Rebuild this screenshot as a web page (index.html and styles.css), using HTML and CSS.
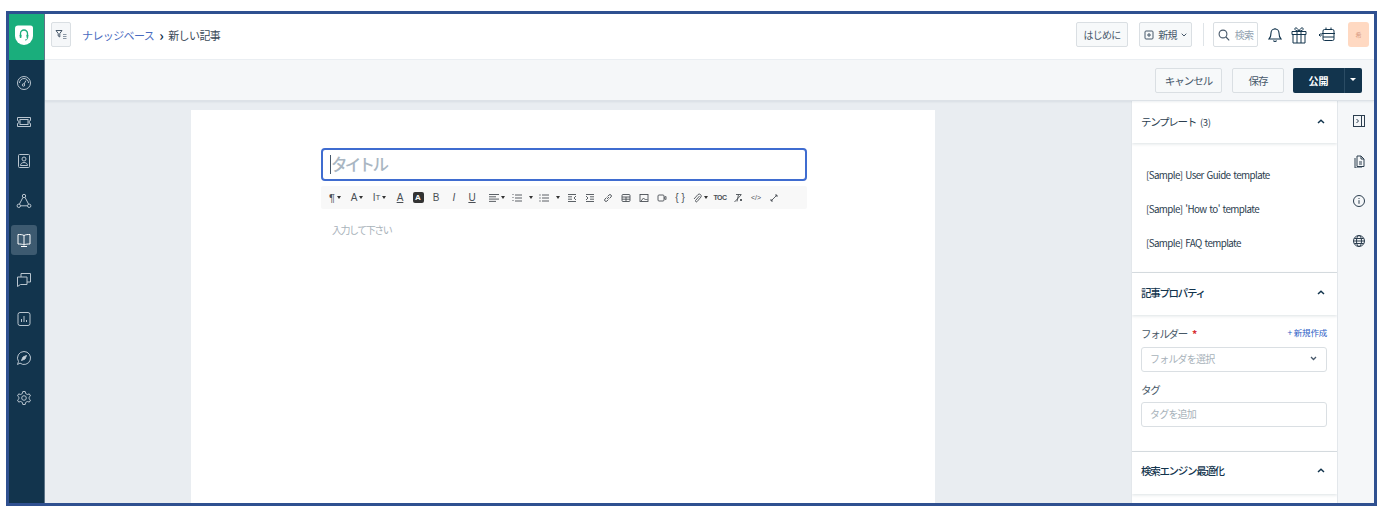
FILE: index.html
```html
<!DOCTYPE html>
<html lang="ja">
<head>
	<meta charset="utf-8">
	<title>新しい記事</title>
	<link rel="stylesheet" href="styles.css">
</head>
<body>
	<div id="frame">
		<nav id="sidebar">
			<div id="logo">
				<svg width="18" height="20" viewBox="0 0 18 20"><path d="M3 .5h12.500Q18 .5 18 3v8a9 9 0 0 1-18 0V3.500Q0 .5 3 .5z" fill="#fff"/><path d="M5.500 11V8.500a3.500 3.500 0 0 1 7 0V11" fill="none" stroke="#1aae7c" stroke-width="1.300"/><rect x="4.700" y="9.500" width="1.800" height="3.500" rx=".8" fill="#1aae7c"/><rect x="11.500" y="9.500" width="1.800" height="3.500" rx=".8" fill="#1aae7c"/><path d="M12.500 13c0 1.500-1 2-2.500 2" fill="none" stroke="#1aae7c" stroke-width=".9"/></svg>
			</div>
			<div class="nav-item">
				<svg class="nav-icon" viewBox="0 0 16 16"><circle cx="8" cy="8" r="6.500"/><path d="M3.500 8a4.500 4.500 0 0 1 9 0M8 9l2-3.500"/><circle cx="7.500" cy="10" r="1.200"/></svg>
			</div>
			<div class="nav-item">
				<svg class="nav-icon" viewBox="0 0 16 16"><path d="M1.500 3.500h13v3a1.500 1.500 0 0 0 0 3v3h-13v-3a1.500 1.500 0 0 0 0-3z"/><rect x="4" y="5.500" width="8" height="5"/></svg>
			</div>
			<div class="nav-item">
				<svg class="nav-icon" viewBox="0 0 16 16"><rect x="2.500" y="1.500" width="11" height="13" rx="1"/><circle cx="8" cy="6" r="2"/><path d="M4.500 12.500c0-4 7-4 7 0z"/></svg>
			</div>
			<div class="nav-item">
				<svg class="nav-icon" viewBox="0 0 16 16"><circle cx="8" cy="3" r="1.700"/><circle cx="2.800" cy="12.800" r="1.700"/><circle cx="13.200" cy="12.800" r="1.700"/><path d="M4.500 12.800h7M6.900 4.500 3.500 11M9.100 4.500l3.400 6.500"/></svg>
			</div>
			<div class="nav-item active">
				<svg class="nav-icon bright" viewBox="0 0 16 16"><path d="M8 3.500C6.500 2.500 4 2.500 2 2.500v9.500c2 0 4.500 0 6 1 1.500-1 4-1 6-1V2.500c-2 0-4.500 0-6 1zM8 3.500V13M5 14.500h6"/></svg>
			</div>
			<div class="nav-item">
				<svg class="nav-icon" viewBox="0 0 16 16"><path d="M5 5V1.500h9.500V10H11"/><path d="M1.500 5H11v7.500H4.500l-3 2z"/></svg>
			</div>
			<div class="nav-item">
				<svg class="nav-icon" viewBox="0 0 16 16"><rect x="2" y="1.500" width="12" height="13" rx="2"/><path d="M5.500 11V8M8 11V5M10.500 11V9"/></svg>
			</div>
			<div class="nav-item">
				<svg class="nav-icon" viewBox="0 0 16 16"><path d="M8 1.500a6.500 6.500 0 1 1-4 11.600L1.500 14.500l1-3A6.500 6.500 0 0 1 8 1.500z"/><path d="M5.500 10.500 7 7l3.500-1.500L9 9z" fill="#c9d3db"/></svg>
			</div>
			<div class="nav-item">
				<svg class="nav-icon" viewBox="0 0 16 16"><circle cx="8" cy="8" r="2.300"/><path d="M6.800 1.500h2.400l.4 2 1.700 1 2-.6 1.200 2-1.500 1.400v1.400l1.500 1.400-1.200 2-2-.6-1.700 1-.4 2H6.800l-.4-2-1.700-1-2 .6-1.200-2 1.500-1.400V7.300L1.500 5.900l1.200-2 2 .6 1.700-1z"/></svg>
			</div>
		</nav>

		<div id="main">
			<header id="topbar">
				<div class="filter-btn">
					<svg width="12" height="12" viewBox="0 0 12 12"><path d="M1 1.500h6L4.800 4.500V8L3.200 7V4.500z" fill="none" stroke="#47586a" stroke-width="1"/><path d="M8 5.500h3.500M8 7.500h3.500M8 9.500h3.500" stroke="#8a97a4" stroke-width="1"/></svg>
				</div>
				<div class="crumbs"><a>ナレッジベース</a><span class="crumb-sep">›</span><span>新しい記事</span></div>
				<div class="top-right">
					<div class="btn small start-btn">はじめに</div>
					<div class="btn small new-btn">
						<svg width="10" height="10" viewBox="0 0 10 10"><rect x="1" y="1" width="8" height="8" rx="1" fill="none" stroke="#47586a"/><path d="M3 5h4M5 3v4" stroke="#47586a"/></svg>
						<span>新規</span>
						<svg width="6" height="4" viewBox="0 0 6 4"><path d="M.7.700 3 3 5.300.700" fill="none" stroke="#47586a" stroke-width="1"/></svg>
					</div>
					<div class="top-sep"></div>
					<div class="btn small search-btn">
						<svg width="12" height="12" viewBox="0 0 12 12"><circle cx="5" cy="5" r="3.900" fill="none" stroke="#47586a" stroke-width="1.100"/><path d="m8 8 3.200 3.400" stroke="#47586a" stroke-width="1.100"/></svg>
						<span>検索</span>
					</div>
					<svg class="bell" width="14" height="18" viewBox="0 3.500 14 15"><path d="M1 15c1.500-1.500 2-2.500 2-6a4 4 0 0 1 8 0c0 3.500.5 4.500 2 6zM5.500 16.500a1.600 1.600 0 0 0 3 0M7 5V4" fill="none" stroke="#12344d" stroke-width="1.100"/></svg>
					<svg class="gift" width="16" height="20" viewBox="0 0 16 20"><path d="M1 6.500h14v3H1zM2 9.500h12v8.500H2zM6 6.500V18M10 6.500V18M8 6C6 2 3.500 2 4 4.500 4.300 6 8 6 8 6zM8 6c2-4 4.500-4 4-1.500C11.700 6 8 6 8 6z" fill="none" stroke="#12344d" stroke-width="1"/></svg>
					<svg class="tray" width="18" height="18" viewBox="0 0 18 18"><rect x="5" y="3.500" width="11" height="11" rx="1.500" fill="none" stroke="#12344d"/><path d="M3.500 7.500H17M5 11h11M8 1.500v2M13 1.500v2M1 9h3M1 9l1.500-1.500M1 9l1.500 1.500" fill="none" stroke="#12344d" stroke-width="1"/></svg>
					<div class="avatar">希</div>
				</div>
			</header>

			<div id="actionbar">
				<div class="btn action cancel">キャンセル</div>
				<div class="btn action save">保存</div>
				<div class="publish"><span class="publish-label">公開</span><span class="publish-caret"></span></div>
			</div>

			<div id="workspace">
				<div id="canvas">
					<div id="paper">
						<div class="title-box"><span class="cursor"></span><span>タイトル</span></div>
						<div class="toolbar">
							<span class="tool dd para">¶<i class="drop"></i></span>
							<span class="tool dd">A<i class="drop"></i></span>
							<span class="tool dd size">I<small>T</small><i class="drop"></i></span>
							<span class="tool"><u>A</u></span>
							<span class="tool"><span class="inv">A</span></span>
							<span class="tool">B</span>
							<span class="tool ital">I</span>
							<span class="tool"><u>U</u></span>
							<span class="tool align">
								<svg class="tool-svg" viewBox="0 0 10 10"><path d="M0 1.500h10M0 3.800h7M0 6.100h10M0 8.400h7"/></svg><i class="drop"></i>
							</span>
							<span class="tool list">
								<svg class="tool-svg" viewBox="0 0 10 10"><path d="M3 2h7M3 5h7M3 8h7M.5 1.500h1M.5 4.500h1M.5 7.500h1"/></svg><i class="drop far"></i>
							</span>
							<span class="tool list">
								<svg class="tool-svg" viewBox="0 0 10 10"><path d="M3 2h7M3 5h7M3 8h7M.3 2h1.400M.3 5h1.400M.3 8h1.400"/></svg><i class="drop far"></i>
							</span>
							<span class="tool">
								<svg class="tool-svg" viewBox="0 0 10 10"><path d="M1 1.500h8M1 8.500h8M1 3.800h4M1 6.200h4M9 3 7 5l2 2"/></svg>
							</span>
							<span class="tool">
								<svg class="tool-svg" viewBox="0 0 10 10"><path d="M1 1.500h8M1 8.500h8M5 3.800h4M5 6.200h4M1 3l2 2-2 2"/></svg>
							</span>
							<span class="tool">
								<svg class="tool-svg" viewBox="0 0 10 10"><path d="M4 6 6 4M3.500 4.500 2 6a1.400 1.400 0 0 0 2 2l1.500-1.500M4.500 3.500 6 2a1.400 1.400 0 0 1 2 2L6.500 5.500"/></svg>
							</span>
							<span class="tool">
								<svg class="tool-svg" viewBox="0 0 10 10"><rect x="1" y="1.500" width="8" height="7" rx="1"/><path d="M1 4h8M1 6.200h8M5 4v4.500"/></svg>
							</span>
							<span class="tool">
								<svg class="tool-svg" viewBox="0 0 10 10"><rect x="1" y="1.500" width="8" height="7"/><path d="m2 8 2.500-3 2 2 1-1 1 1"/></svg>
							</span>
							<span class="tool">
								<svg class="tool-svg" viewBox="0 0 10 10"><rect x="1" y="2" width="6" height="6" rx="1"/><path d="M7 4.500 9 3.500v3L7 5.500"/></svg>
							</span>
							<span class="tool">{ }</span>
							<span class="tool dd">
								<svg class="tool-svg" viewBox="0 0 10 10"><path d="M7.500 3 3.500 7.500a1 1 0 0 0 1.500 1.200L9 4a2 2 0 0 0-3-2.500L2 6"/></svg><i class="drop"></i>
							</span>
							<span class="tool toc">TOC</span>
							<span class="tool">
								<svg class="tool-svg" viewBox="0 0 10 10"><path d="M3 1.500h5M5.500 1.500 4 8.500M1.500 9 8.500 1.500M7 6l2 2M9 6 7 8"/></svg>
							</span>
							<span class="tool code">&lt;/&gt;</span>
							<span class="tool">
								<svg class="tool-svg" viewBox="0 0 10 10"><path d="M2 8l6-6M6 2h2v2M2 6v2h2"/></svg>
							</span>
						</div>
						<div class="body-placeholder">入力して下さい</div>
					</div>
				</div>

				<aside id="panel">
					<div class="panel-head">
						<span>テンプレート<em>(3)</em></span>
						<svg width="8" height="5" viewBox="0 0 8 5"><path d="M1 4 4 1.200 7 4" fill="none" stroke="#12344d" stroke-width="1.500"/></svg>
					</div>
					<div class="template-list">
						<div>[Sample] User Guide template</div>
						<div>[Sample] 'How to' template</div>
						<div>[Sample] FAQ template</div>
					</div>
					<div class="panel-head prop-head">
						<span class="bold">記事プロパティ</span>
						<svg width="8" height="5" viewBox="0 0 8 5"><path d="M1 4 4 1.200 7 4" fill="none" stroke="#12344d" stroke-width="1.500"/></svg>
					</div>
					<div class="props">
						<div class="label-row">
							<span>フォルダー<b>*</b></span>
							<a>+ 新規作成</a>
						</div>
						<div class="field">
							<span>フォルダを選択</span>
							<svg width="7" height="5" viewBox="0 0 7 5"><path d="M1 1 3.500 3.500 6 1" fill="none" stroke="#47586a" stroke-width="1.300"/></svg>
						</div>
						<div class="label-row tag-label"><span>タグ</span></div>
						<div class="field"><span>タグを追加</span></div>
					</div>
					<div class="panel-head seo-head">
						<span class="bold">検索エンジン最適化</span>
						<svg width="8" height="5" viewBox="0 0 8 5"><path d="M1 4 4 1.200 7 4" fill="none" stroke="#12344d" stroke-width="1.500"/></svg>
					</div>
				</aside>

				<div id="rail">
					<svg class="rail-icon" viewBox="0 0 14 14"><rect x="1.500" y="1.500" width="11" height="11"/><path d="M9.500 1.500v11M4.500 5 6.500 7l-2 2"/></svg>
					<svg class="rail-icon" viewBox="0 0 14 14"><path d="M5 2h4l3 3v7.500H5zM9 2v3h3M3 4v10h7M7 8h3M7 10h3"/></svg>
					<svg class="rail-icon" viewBox="0 0 14 14"><circle cx="7" cy="7" r="5.500"/><path d="M7 6.200v3.600M7 4v1"/></svg>
					<svg class="rail-icon" viewBox="0 0 14 14"><circle cx="7" cy="7" r="5.500"/><ellipse cx="7" cy="7" rx="2.500" ry="5.500"/><path d="M1.500 7h11M2.300 4.500h9.400M2.300 9.500h9.400"/></svg>
				</div>
			</div>
		</div>
	</div>
</body>
</html>
```

FILE: styles.css
```css
*{
	box-sizing: border-box;
}

html, body{
	width: 100%;
	height: 100%;
	margin: 0px;
	background-color: #fff;
	overflow: hidden;
	font-family: "Noto Sans CJK JP", "Noto Sans", sans-serif;
	color: #12344d;
}

#frame{
	display: flex;
	width: 1371px;
	height: 495px;
	margin: 11px 0 0 6px;
	border: 3px solid #2f5090;
	overflow: hidden;
}

/* left nav */
#sidebar{
	flex: 0 0 36px;
	display: flex;
	flex-direction: column;
	align-items: center;
	padding-right: 5px;
	background-color: #12344d;
	border-right: 1px solid #5d7488;
}

#logo{
	display: flex;
	align-items: center;
	justify-content: center;
	flex: 0 0 46px;
	width: 35px;
	margin: 0 -5px 3px 0;
	padding: 0 5px 5px 0;
	background-color: #1aae7c;
}

.nav-item{
	display: flex;
	align-items: center;
	justify-content: center;
	flex: 0 0 39.400px;
	width: 26px;
}

.nav-item.active{
	flex: 0 0 30px;
	margin: 4.700px 0;
	border-radius: 3px;
	background-color: #3d5a70;
}

.nav-icon{
	width: 16px;
	height: 16px;
	fill: none;
	stroke: #b9c5cf;
	stroke-width: 1;
}

.nav-icon.bright{
	stroke: #fff;
}

#main{
	flex: 1;
	display: flex;
	flex-direction: column;
	min-width: 0;
}

/* top bar */
#topbar{
	flex: 0 0 46px;
	display: flex;
	align-items: center;
	padding: 0 5px 4px 6px;
	background-color: #fff;
	border-bottom: 1px solid #ebeff3;
}

.filter-btn{
	display: flex;
	align-items: center;
	justify-content: center;
	width: 20px;
	height: 25px;
	border: 1px solid #dadfe3;
	border-radius: 2px;
	background-color: #f5f7f9;
}

.crumbs{
	display: flex;
	align-items: center;
	margin-left: 11px;
	font-size: 11px;
	letter-spacing: -0.600px;
	color: #3a4a58;
}

.crumbs a{
	color: #4a6bc0;
}

.crumb-sep{
	margin: 0 5px 0 5px;
	font-size: 14px;
	font-weight: bold;
	line-height: 14px;
	color: #12344d;
}

.top-right{
	display: flex;
	align-items: center;
	margin-left: auto;
}

.btn{
	display: flex;
	align-items: center;
	justify-content: center;
	border: 1px solid #dadfe3;
	border-radius: 2px;
	background-color: #f7f9fa;
	color: #47586a;
}

.btn.small{
	height: 25px;
	font-size: 10px;
	letter-spacing: -0.800px;
}

.start-btn{
	width: 52px;
}

.new-btn{
	gap: 4px;
	width: 53px;
	margin-left: 11px;
}

.top-sep{
	width: 1px;
	height: 23px;
	margin: 0 9px 0 11px;
	background-color: #dfe4e8;
}

.btn.search-btn{
	gap: 5px;
	width: 45px;
	background-color: #fff;
	color: #92a2b1;
}

.bell{
	margin-left: 10px;
}

.gift{
	margin-left: 9px;
}

.tray{
	margin-left: 11px;
}

.avatar{
	display: flex;
	align-items: center;
	justify-content: center;
	width: 21px;
	height: 25px;
	margin-left: 12px;
	border-radius: 3px;
	background-color: #ffd9c2;
	font-size: 6px;
	color: #d99c84;
}

/* action bar */
#actionbar{
	flex: 0 0 41px;
	display: flex;
	align-items: center;
	justify-content: flex-end;
	padding: 0 12px 0 0;
	background-color: #f5f7f9;
	border-bottom: 1px solid #dde2e7;
	box-shadow: 0 1px 2px rgba(18, 52, 77, 0.08);
	position: relative;
}

.btn.action{
	height: 25px;
	font-size: 10.500px;
	letter-spacing: -1px;
}

.cancel{
	width: 67px;
}

.save{
	width: 52px;
	margin-left: 10px;
}

.publish{
	display: flex;
	width: 69px;
	height: 25px;
	margin-left: 9px;
	border-radius: 2px;
	overflow: hidden;
	background-color: #12344d;
	color: #fff;
	font-size: 10px;
	font-weight: bold;
}

.publish-label{
	display: flex;
	align-items: center;
	justify-content: center;
	flex: 1;
	border-right: 1px solid #2b4c64;
}

.publish-caret{
	position: relative;
	flex: 0 0 17px;
}

.publish-caret::after{
	content: "";
	position: absolute;
	top: 10px;
	left: 5px;
	border: 3px solid transparent;
	border-top: 3px solid #fff;
}

/* editor */
#workspace{
	flex: 1;
	display: flex;
	min-height: 0;
}

#canvas{
	flex: 1;
	display: flex;
	padding: 9px 0 0 146px;
	background-color: #e9edf1;
	min-width: 0;
}

#paper{
	width: 744px;
	padding: 38px 128px 0 130px;
	background-color: #fff;
}

.title-box{
	display: flex;
	align-items: center;
	height: 33px;
	padding: 0 0 1px 7px;
	border: 2px solid #3f6cd0;
	border-radius: 4px;
	font-size: 16.500px;
	font-weight: 500;
	letter-spacing: -2.700px;
	color: #a9b6c2;
}

.cursor{
	width: 1px;
	height: 19px;
	margin-right: 0px;
	background-color: #47586a;
}

.toolbar{
	display: flex;
	align-items: center;
	height: 23px;
	margin-top: 5px;
	padding-left: 3px;
	border-radius: 2px;
	background-color: #f8f8f8;
	color: #4a4f55;
	font-size: 10px;
	font-family: "Liberation Sans", sans-serif;
}

.tool{
	flex: 0 0 18px;
	display: inline-flex;
	align-items: center;
	justify-content: center;
	line-height: 12px;
}

.tool.dd{
	flex-basis: 22px;
}

.tool.size{
	flex-basis: 23px;
}

.tool.align{
	flex-basis: 28px;
	padding-left: 4px;
}

.tool.list{
	flex-basis: 27px;
}

.para{
	font-size: 11px;
}

.tool small{
	font-size: 8px;
}

.drop{
	width: 0;
	height: 0;
	margin-left: 2px;
	border: 2.500px solid transparent;
	border-top: 3px solid #333;
	border-bottom: 0;
}

.drop.far{
	margin-left: 7px;
}

.inv{
	display: flex;
	align-items: center;
	justify-content: center;
	width: 11px;
	height: 11px;
	border-radius: 2px;
	background-color: #333;
	color: #fff;
	font-size: 8px;
	font-weight: bold;
}

.ital{
	font-style: italic;
}

.toc{
	font-size: 7px;
	font-weight: bold;
	letter-spacing: -0.500px;
}

.code{
	font-size: 7px;
}

.tool-svg{
	flex: none;
	width: 10px;
	height: 10px;
	fill: none;
	stroke: #4a4f55;
	stroke-width: 0.900;
}

.body-placeholder{
	margin-top: 13px;
	padding-left: 11px;
	font-size: 10px;
	letter-spacing: -1.500px;
	color: #a8b2ba;
}

/* right panel */
#panel{
	flex: 0 0 207px;
	overflow: hidden;
	background-color: #fff;
	border-left: 1px solid #e3e7eb;
	border-right: 1px solid #e3e7eb;
}

.panel-head{
	display: flex;
	align-items: center;
	justify-content: space-between;
	height: 42px;
	padding: 0 12px 2px 9px;
	font-size: 10.500px;
	letter-spacing: -1.300px;
	color: #2c3e4f;
	box-shadow: 0 1px 3px rgba(18, 52, 77, 0.15);
	position: relative;
}

.panel-head em{
	margin-left: 4px;
	font-style: normal;
	font-size: 9.500px;
	letter-spacing: -0.300px;
}

.bold{
	font-weight: 500;
	color: #12344d;
}

.prop-head{
	padding-bottom: 4px;
}

.template-list{
	display: flex;
	flex-direction: column;
	gap: 16px;
	height: 130px;
	padding: 23px 0 0 14px;
	font-size: 9.800px;
	letter-spacing: -0.600px;
	word-spacing: 1.200px;
	line-height: 18px;
	color: #2c3e4f;
	border-bottom: 1px solid #dadfe3;
}

.props{
	height: 137px;
	padding: 8px 10px 0 9px;
	border-bottom: 1px solid #dadfe3;
}

.label-row{
	display: flex;
	align-items: center;
	justify-content: space-between;
	height: 20px;
	font-size: 10.500px;
	letter-spacing: -1.300px;
	color: #475867;
}

.label-row b{
	margin-left: 5px;
	color: #d72d30;
}

.label-row a{
	margin-top: -2px;
	font-size: 8.500px;
	letter-spacing: -0.200px;
	color: #2c5cc5;
}

.tag-label{
	margin-top: 7px;
}

.field{
	display: flex;
	align-items: center;
	justify-content: space-between;
	height: 25px;
	margin-top: 4px;
	padding: 0 9px 2px 8px;
	border: 1px solid #dadfe3;
	border-radius: 3px;
	font-size: 10px;
	letter-spacing: -0.800px;
	color: #a8b2ba;
}

.tag-label + .field{
	margin-top: 3px;
}

.seo-head{
	padding-bottom: 5px;
}

/* right rail */
#rail{
	flex: 0 0 36px;
	display: flex;
	flex-direction: column;
	align-items: center;
	gap: 26px;
	padding: 13px 0 0 5px;
	background-color: #f5f7f9;
}

.rail-icon{
	width: 14px;
	height: 14px;
	fill: none;
	stroke: #2c3e4f;
	stroke-width: 1;
}
```
